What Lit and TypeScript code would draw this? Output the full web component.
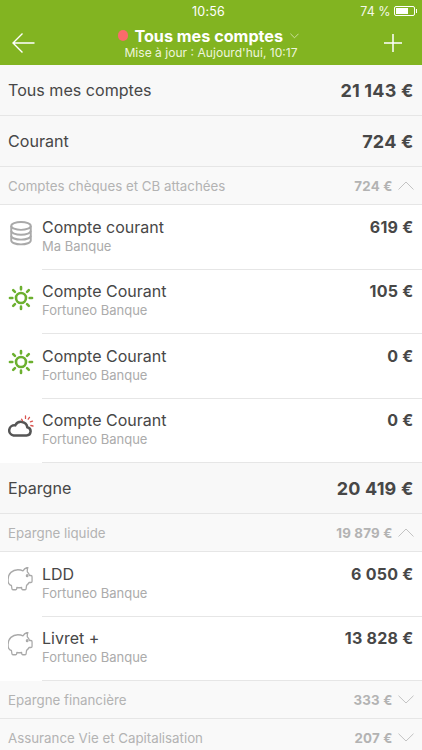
import { LitElement, html, css, svg } from "lit";
import { customElement } from "lit/decorators.js";

const chevron = (up: boolean) => html`<svg class="chev" viewBox="0 0 16 9" fill="none" stroke="#b5b5b5" stroke-width="0.8">
  <path d=${up ? "M0.5 8.5L8 1l7.5 7.5" : "M0.5 .7L8 8l7.5-7.3"}></path></svg>`;

const sun = svg`<g stroke="#6cb02f" stroke-width="2.400" fill="none" stroke-linecap="round">
  <circle cx="12" cy="12" r="4.600"></circle>
  <path d="M12 1.800v2.200M12 20v2.200M1.800 12H4M20 12h2.200M4.800 4.800l1.600 1.600M17.600 17.600l1.600 1.600M4.800 19.200l1.600-1.600M17.600 6.400l1.600-1.600"></path></g>`;

const db = svg`<g stroke="#a9a9a9" stroke-width="1.800" fill="none">
  <ellipse cx="12" cy="5.500" rx="9" ry="3.600"></ellipse>
  <path d="M3 5.500v13.400c0 2 4 3.600 9 3.600s9-1.600 9-3.600V5.500"></path>
  <path d="M3 10c0 2 4 3.600 9 3.600S21 12 21 10M3 14.500c0 2 4 3.600 9 3.600s9-1.600 9-3.600"></path></g>`;

const cloud = svg`<path d="M5.500 21.500h13a4.200 4.200 0 0 0 .8-8.300 6.400 6.400 0 0 0-12-1.900A5.100 5.100 0 0 0 5.500 21.500z" fill="none" stroke="#555" stroke-width="2.500"></path>
  <path d="M13.500 5.200l1 1.400M17.500 2v2.400M21.500 3.400l-1.300 1.800M24.500 7.200l-2.100.7M25 12l-2.200-.5" stroke="#d9534f" stroke-width="1.300" stroke-linecap="round" fill="none"></path>`;

const pig = svg`<g transform="translate(-2.400 -4.300) scale(.98 1.130)" fill="none" stroke="#a9a9a9" stroke-width="1.300" stroke-linejoin="round">
  <path d="M2.500 15c0-5.400 4.500-8.800 10-8.800 2 0 3.800.3 5.200 1 1-1.500 2.900-2.700 5-3-.6 1.600-.8 3-.4 4.100 1 .9 1.700 1.900 2.100 3h1.500c.7 0 1.100.5 1.100 1.100v4c0 .7-.5 1.100-1.200 1.100h-1.800c-.7 1-1.500 1.900-2.600 2.600l-.5 3c-.1.500-.5.800-1 .8h-2.400c-.5 0-.9-.3-1-.8l-.2-1.200c-1.600.3-3.200.3-4.800 0l-.2 1.200c-.1.500-.5.800-1 .8H7.500c-.5 0-.9-.3-1-.8l-.6-3C3.700 19.800 2.500 17.600 2.500 15z"></path>
  <circle cx="22" cy="11.500" r=".8"></circle></g>`;

type Item = { icon: unknown; vb: string; name: string; bank: string; amount: string };

const item = (i: Item) => html`<div class="item">
  <svg class="icon" viewBox=${i.vb}>${i.icon}</svg>
  <div class="item-body">
    <div class="names"><div class="name">${i.name}</div><div class="bank">${i.bank}</div></div>
    <div class="amount">${i.amount}</div>
  </div>
</div>`;

const group = (label: string, amount: string) => html`<div class="group"><span>${label}</span><span class="amount">${amount}</span></div>`;
const sub = (label: string, amount: string, up: boolean) => html`<div class="sub"><span>${label}</span><span class="right"><span class="sub-amount">${amount}</span>${chevron(up)}</span></div>`;

@customElement("app-root")
export class AppRoot extends LitElement {
  static styles = css`
    :host { display: block; width: 422px; height: 750px; overflow: hidden; background: #f8f8f8; font-family: Inter, "Liberation Sans", sans-serif; color: #474747; }
    .header { background: #82b421; color: #fff; height: 65px; display: flex; flex-direction: column; box-sizing: border-box; }
    .status { height: 22px; display: grid; grid-template-columns: 1fr auto 1fr; align-items: center; font-size: 12.500px; padding: 0 5px 0 0; }
    .time { grid-column: 2; letter-spacing: .2px; }
    .batt { grid-column: 3; justify-self: end; display: flex; align-items: center; gap: 3px; font-size: 12.500px; color: #f4f8e8; }
    .battery { width: 21px; height: 10px; border: 1px solid #fff; border-radius: 2px; box-sizing: border-box; padding: 1px; display: flex; }
    .battery i { display: block; width: 74%; background: #fff; }
    .cap { width: 1.500px; height: 4px; background: #fff; margin-left: -2px; }
    .nav { flex: 1; display: grid; grid-template-columns: 60px 1fr 60px; align-items: center; }
    .back { width: 26px; height: 24px; margin-left: 10px; margin-bottom: 2px; }
    .plus { width: 20px; height: 20px; justify-self: end; margin-right: 19px; margin-bottom: 2px; }
    .title-box { text-align: center; margin-top: -2px; }
    .title { display: flex; justify-content: center; align-items: center; font-size: 16.200px; font-weight: 700; line-height: 20px; margin-right: 5px; }
    .dot { width: 10.500px; height: 10.500px; border-radius: 50%; background: #fa6b6b; margin-right: 6px; }
    .title svg { width: 9px; height: 6px; margin-left: 7px; }
    .update { font-size: 12.100px; line-height: 14px; color: #eef5dc; }
    .group { height: 50px; display: flex; justify-content: space-between; align-items: center; padding: 0 8.500px 0 8px; border-bottom: 1px solid #e6e6e6; font-size: 16.100px; background: #f8f8f8; }
    .group .amount { font-size: 18px; font-weight: 700; letter-spacing: .2px; }
    .sub { height: 38px; box-sizing: border-box; display: flex; justify-content: space-between; align-items: center; padding: 0 8.500px 0 8px; border-bottom: 1px solid #e6e6e6; font-size: 13.300px; color: #b3b3b3; background: #f9f9f9; }
    .right { display: flex; align-items: center; gap: 5px; }
    .sub-amount { font-weight: 700; letter-spacing: .2px; }
    .chev { width: 16px; height: 9px; }
    .item { height: 64.500px; display: flex; background: #fff; }
    .icon { width: 26px; height: 26px; flex: none; margin: 15px 8px 0 8px; }
    .item-body { flex: 1; display: flex; justify-content: space-between; border-bottom: 1px solid #e6e6e6; padding: 11.500px 8.500px 0 0; box-sizing: border-box; }
    .name { font-size: 16px; line-height: 20px; }
    .bank { font-size: 13px; line-height: 18px; color: #ababab; }
    .item .amount { font-size: 16px; line-height: 20px; font-weight: 700; letter-spacing: .25px; }
  `;

  render() {
    const F = "Fortuneo Banque";
    return html`
      <div class="header">
        <div class="status"><span class="time">10:56</span>
          <span class="batt">74 %<span class="battery"><i></i></span><span class="cap"></span></span></div>
        <div class="nav">
          <svg class="back" viewBox="0 0 26 24" fill="none" stroke="#fff" stroke-width="1.400"><path d="M24.500 12H3M12.500 2.500L3 12l9.500 9.500"></path></svg>
          <div class="title-box">
            <div class="title"><span class="dot"></span>Tous mes comptes<svg viewBox="0 0 10 6" fill="none" stroke="#e6f0cc" stroke-width=".8"><path d="M.5.5L5 5l4.500-4.500"></path></svg></div>
            <div class="update">Mise à jour : Aujourd'hui, 10:17</div>
          </div>
          <svg class="plus" viewBox="0 0 20 20" fill="none" stroke="#fff" stroke-width="1.500"><path d="M10 1v18M1 10h18"></path></svg>
        </div>
      </div>
      ${group("Tous mes comptes", "21 143 €")}
      ${group("Courant", "724 €")}
      ${sub("Comptes chèques et CB attachées", "724 €", true)}
      ${item({ icon: db, vb: "0 0 24 24", name: "Compte courant", bank: "Ma Banque", amount: "619 €" })}
      ${item({ icon: sun, vb: "0 0 24 24", name: "Compte Courant", bank: F, amount: "105 €" })}
      ${item({ icon: sun, vb: "0 0 24 24", name: "Compte Courant", bank: F, amount: "0 €" })}
      ${item({ icon: cloud, vb: "0 0 26 26", name: "Compte Courant", bank: F, amount: "0 €" })}
      ${group("Epargne", "20 419 €")}
      ${sub("Epargne liquide", "19 879 €", true)}
      ${item({ icon: pig, vb: "0 0 26 26", name: "LDD", bank: F, amount: "6 050 €" })}
      ${item({ icon: pig, vb: "0 0 26 26", name: "Livret +", bank: F, amount: "13 828 €" })}
      ${sub("Epargne financière", "333 €", false)}
      ${sub("Assurance Vie et Capitalisation", "207 €", false)}
    `;
  }
}
